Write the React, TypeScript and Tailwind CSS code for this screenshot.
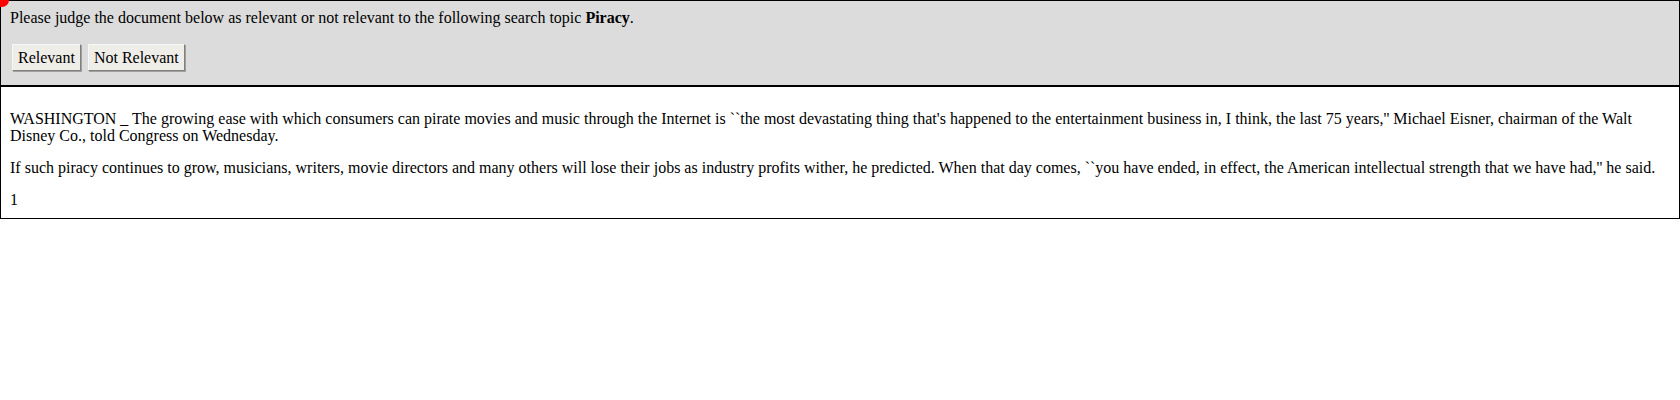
import React from 'react';

const App: React.FC = () => {
  return (
    <div className="relative bg-white text-black text-[16px] leading-[18px] font-['Liberation_Serif','Times_New_Roman',serif]">
      {/* red marker in the corner */}
      <div className="absolute -left-[7px] -top-[7px] w-[16px] h-[14px] rounded-full bg-[#ff0000]" />

      {/* Judge panel */}
      <div className="border border-black bg-[#dcdcdc] px-[9px] pt-[8px] pb-[14px]">
        <div>
          Please judge the document below as relevant or not relevant to the following search topic <b>Piracy</b>.
        </div>
        <div className="mt-[17px] flex gap-[7px] px-[2px]">
          <button className="h-[27px] px-[5px] bg-[#efede8] border border-t-[#f8f8f8] border-l-[#f8f8f8] border-r-[#808080] border-b-[#808080] shadow-[1px_1px_0_#a0a0a0]">
            Relevant
          </button>
          <button className="h-[27px] px-[5px] bg-[#efede8] border border-t-[#f8f8f8] border-l-[#f8f8f8] border-r-[#808080] border-b-[#808080] shadow-[1px_1px_0_#a0a0a0]">
            Not Relevant
          </button>
        </div>
      </div>

      {/* Document */}
      <div className="border border-black px-[9px] pt-[23px] pb-[10px] leading-[17px] flex flex-col gap-[15px]">
        <p>
          WASHINGTON _ The growing ease with which consumers can pirate movies and music through the Internet is ``the most devastating thing that's happened to the entertainment business in, I think, the last 75 years,'' Michael Eisner, chairman of the Walt Disney Co., told Congress on Wednesday.
        </p>
        <p>
          If such piracy continues to grow, musicians, writers, movie directors and many others will lose their jobs as industry profits wither, he predicted. When that day comes, ``you have ended, in effect, the American intellectual strength that we have had,'' he said.
        </p>
        <p>1</p>
      </div>
    </div>
  );
};

export default App;
